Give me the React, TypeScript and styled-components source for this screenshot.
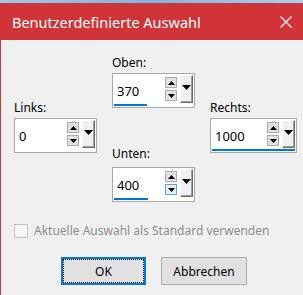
import React from 'react';
import styled, { createGlobalStyle } from 'styled-components';

const GlobalStyle = createGlobalStyle`
  html, body {
    margin: 0;
    padding: 0;
    overflow: hidden;
    background: #8fc0e4;
  }
`;

const Desktop = styled.div`
  width: 303px;
  height: 295px;
  padding-top: 3px;
  box-sizing: border-box;
  background: linear-gradient(90deg, #9cc8ea 0%, #7fb6df 50%, #a8d1ee 100%);
`;

const Window = styled.div`
  height: 292px;
  border-left: 1px solid #d13438;
  background: #f0f0f0;
  font-family: 'Noto Sans', 'Open Sans', sans-serif;
`;

const TitleBar = styled.div`
  height: 37px;
  background: #d13438;
  display: flex;
  align-items: center;
  justify-content: space-between;
  padding: 0 11px;
`;

const Title = styled.div`
  color: #ffffff;
  font-size: 14.5px;
  line-height: 20px;
  margin-top: 1px;
`;

const Body = styled.div`
  padding: 15px 0 0 13px;
`;

const Fields = styled.div`
  display: grid;
  grid-template-columns: 83px 83px 87px;
  column-gap: 15px;
  align-items: start;
`;

const Column = styled.div<{ $top?: number }>`
  display: flex;
  flex-direction: column;
  margin-top: ${(p) => p.$top ?? 0}px;
`;

const FieldWrap = styled.div<{ $top?: number }>`
  display: flex;
  flex-direction: column;
  margin-top: ${(p) => p.$top ?? 0}px;
`;

const Label = styled.div<{ $gap?: number }>`
  font-size: 12px;
  line-height: 16px;
  color: #000;
  margin-bottom: ${(p) => p.$gap ?? 2}px;
`;

const Box = styled.div`
  height: 35px;
  box-sizing: border-box;
  border: 1px solid #a9a9a9;
  background: #ffffff;
  padding: 1px 1px 1px 1px;
  display: flex;
  flex-direction: column;
`;

const Row = styled.div`
  height: 28px;
  display: flex;
  align-items: stretch;
`;

const Value = styled.div`
  flex: 1;
  font-size: 13px;
  line-height: 28px;
  padding-left: 3px;
  padding-top: 2px;
  color: #000;
`;

const Spinners = styled.div`
  width: 12px;
  display: flex;
  flex-direction: column;
  justify-content: center;
  gap: 2px;
  margin-right: 3px;
`;

const SpinButton = styled.div<{ $hover?: boolean }>`
  height: 11px;
  box-sizing: border-box;
  border: 1px solid ${(p) => (p.$hover ? '#5ea6e0' : '#adadad')};
  background: ${(p) => (p.$hover ? '#e5f1fb' : '#e1e1e1')};
  display: flex;
  align-items: center;
  justify-content: center;
`;

const DropButton = styled.div`
  width: 13px;
  box-sizing: border-box;
  background: #f0f0f0;
  border-top: 1px solid #ffffff;
  border-left: 1px solid #ffffff;
  border-right: 1px solid #6d6d6d;
  border-bottom: 1px solid #6d6d6d;
  box-shadow: inset -1px -1px 0 #a0a0a0;
  display: flex;
  justify-content: center;
  padding-top: 9px;
`;

const Track = styled.div`
  height: 3px;
  margin-top: 1px;
`;

const Fill = styled.div`
  height: 100%;
  background: #0078d7;
`;

const CheckRow = styled.div`
  display: flex;
  align-items: center;
  gap: 6px;
  margin-top: 21px;
`;

const CheckBox = styled.div`
  width: 14px;
  height: 14px;
  box-sizing: border-box;
  border: 1px solid #c4c4c4;
  background: #f6f6f6;
`;

const CheckText = styled.span`
  font-size: 12px;
  line-height: 16px;
  color: #8d8d8d;
`;

const Buttons = styled.div`
  display: flex;
  gap: 15px;
  margin-top: 18px;
  padding-left: 47px;
`;

const Button = styled.button<{ $default?: boolean }>`
  width: ${(p) => (p.$default ? 85 : 86)}px;
  height: 28px;
  box-sizing: border-box;
  font-family: 'Noto Sans', 'Open Sans', sans-serif;
  font-size: 12px;
  color: #000;
  background: #e1e1e1;
  border: ${(p) => (p.$default ? '2px solid #0078d7' : '1px solid #adadad')};
  padding: 0;
  position: relative;
  ${(p) =>
    p.$default &&
    `
    &::after {
      content: '';
      position: absolute;
      inset: 0;
      border: 1px dotted #000;
    }
  `}
`;

const UpArrow = () => (
  <svg width="7" height="4" viewBox="0 0 7 4">
    <path d="M0 4 L3.5 0 L7 4 Z" fill="#000" />
  </svg>
);

const DownArrow = () => (
  <svg width="7" height="4" viewBox="0 0 7 4">
    <path d="M0 0 L7 0 L3.5 4 Z" fill="#000" />
  </svg>
);

const DropArrow = () => (
  <svg width="9" height="5" viewBox="0 0 9 5">
    <path d="M0 0 L9 0 L4.5 5 Z" fill="#000" />
  </svg>
);

const CloseIcon = () => (
  <svg width="12" height="12" viewBox="0 0 12 12">
    <path d="M0.5 0.5 L11.5 11.5 M11.5 0.5 L0.5 11.5" stroke="#fff" strokeWidth="1.1" />
  </svg>
);

interface SpinFieldProps {
  label: string;
  value: string;
  fill: number;
  hoverDown?: boolean;
  labelGap?: number;
  top?: number;
}

const SpinField: React.FC<SpinFieldProps> = ({ label, value, fill, hoverDown, labelGap, top }) => (
  <FieldWrap $top={top}>
    <Label $gap={labelGap}>{label}</Label>
    <Box>
      <Row>
        <Value>{value}</Value>
        <Spinners>
          <SpinButton>
            <UpArrow />
          </SpinButton>
          <SpinButton $hover={hoverDown}>
            <DownArrow />
          </SpinButton>
        </Spinners>
        <DropButton>
          <DropArrow />
        </DropButton>
      </Row>
      <Track>
        <Fill style={{ width: `${fill}%` }} />
      </Track>
    </Box>
  </FieldWrap>
);

export default function App() {
  return (
    <>
      <GlobalStyle />
      <Desktop>
        <Window>
          <TitleBar>
            <Title>Benutzerdefinierte Auswahl</Title>
            <CloseIcon />
          </TitleBar>
          <Body>
            <Fields>
              <Column $top={45}>
                <SpinField label="Links:" value="0" fill={0} />
              </Column>
              <Column>
                <SpinField label="Oben:" value="370" fill={42} />
                <SpinField label="Unten:" value="400" fill={43} hoverDown labelGap={5} top={38} />
              </Column>
              <Column $top={45}>
                <SpinField label="Rechts:" value="1000" fill={100} />
              </Column>
            </Fields>
            <CheckRow>
              <CheckBox />
              <CheckText>Aktuelle Auswahl als Standard verwenden</CheckText>
            </CheckRow>
            <Buttons>
              <Button $default>OK</Button>
              <Button>Abbrechen</Button>
            </Buttons>
          </Body>
        </Window>
      </Desktop>
    </>
  );
}
